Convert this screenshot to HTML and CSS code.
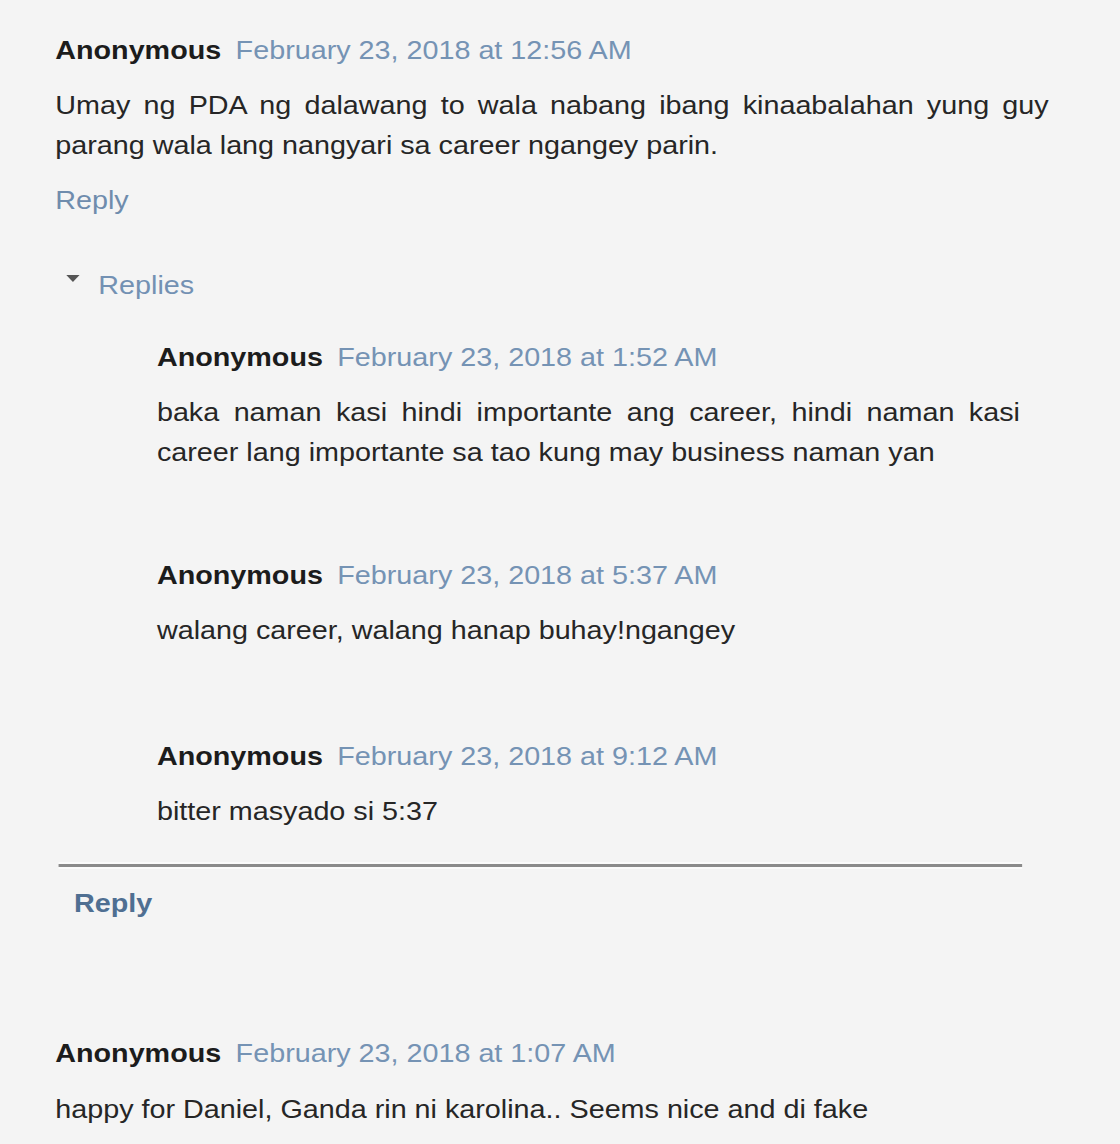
FILE: index.html
```html
<!DOCTYPE html>
<html>
<head>
<meta charset="utf-8">
<link rel="stylesheet" href="styles.css">
</head>
<body>
<div class="page">
  <div class="comment top">
    <div class="head"><span class="name">Anonymous</span><span class="date">February 23, 2018 at 12:56 AM</span></div>
    <p class="text wide">Umay ng PDA ng dalawang to wala nabang ibang kinaabalahan yung guy parang wala lang nangyari sa career ngangey parin.</p>
    <div class="reply-link">Reply</div>
  </div>

  <div class="thread">
    <div class="toggle"><span class="tri"></span><span class="replies">Replies</span></div>
    <div class="nested">
      <div class="comment r1">
        <div class="head"><span class="name">Anonymous</span><span class="date">February 23, 2018 at 1:52 AM</span></div>
        <p class="text narrow">baka naman kasi hindi importante ang career, hindi naman kasi career lang importante sa tao kung may business naman yan</p>
      </div>
      <div class="comment r2">
        <div class="head"><span class="name">Anonymous</span><span class="date">February 23, 2018 at 5:37 AM</span></div>
        <p class="text narrow">walang career, walang hanap buhay!ngangey</p>
      </div>
      <div class="comment r3">
        <div class="head"><span class="name">Anonymous</span><span class="date">February 23, 2018 at 9:12 AM</span></div>
        <p class="text narrow">bitter masyado si 5:37</p>
      </div>
    </div>
    <div class="rule"></div>
    <div class="thread-reply">Reply</div>
  </div>

  <div class="comment last">
    <div class="head"><span class="name">Anonymous</span><span class="date">February 23, 2018 at 1:07 AM</span></div>
    <p class="text wide">happy for Daniel, Ganda rin ni karolina.. Seems nice and di fake</p>
  </div>
</div>
</body>
</html>
```

FILE: styles.css
```css
html, body {
  margin: 0;
  padding: 0;
  background: #f4f4f4;
  overflow: hidden;
}

.page {
  width: 1000px;
  padding: 30px 0 0 50px;
  box-sizing: border-box;
  transform: scaleX(1.105);
  transform-origin: 0 0;
  font-family: "Liberation Sans", Arial, sans-serif;
  font-size: 26px;
  line-height: 40px;
  color: #262626;
}

.comment {
  display: flex;
  flex-direction: column;
}

.head {
  display: flex;
  align-items: baseline;
  gap: 13px;
  white-space: nowrap;
}

.name {
  font-weight: bold;
  color: #1c1c1c;
}

.date {
  color: #7593b4;
}

.text {
  margin: 15px 0 0 0;
  text-align: justify;
}

.wide {
  width: 899px;
}

.narrow {
  width: 781px;
}

.reply-link {
  margin-top: 15px;
  color: #6f8cad;
}

.thread {
  display: flex;
  flex-direction: column;
}

.toggle {
  display: flex;
  align-items: center;
  margin-top: 45px;
  padding-left: 10px;
  height: 40px;
}

.tri {
  width: 0;
  height: 0;
  border-left: 6px solid transparent;
  border-right: 6px solid transparent;
  border-top: 7px solid #555;
  margin-top: -14px;
}

.replies {
  margin-left: 17px;
  color: #7391b3;
}

.nested {
  padding-left: 92px;
  display: flex;
  flex-direction: column;
}

.r1 { margin-top: 32px; }
.r2 { margin-top: 83px; }
.r3 { margin-top: 86px; }

.rule {
  margin: 33px 0 0 3px;
  width: 872px;
  height: 3px;
  background: #8b8b8b;
  box-shadow: 0 -2px 0 #fbfbfb, 0 2px 0 #fbfbfb;
}

.thread-reply {
  margin-top: 16px;
  padding-left: 17px;
  font-weight: bold;
  color: #4f6f92;
}

.last {
  margin-top: 110px;
}

.last .text {
  margin-top: 16px;
}
```
